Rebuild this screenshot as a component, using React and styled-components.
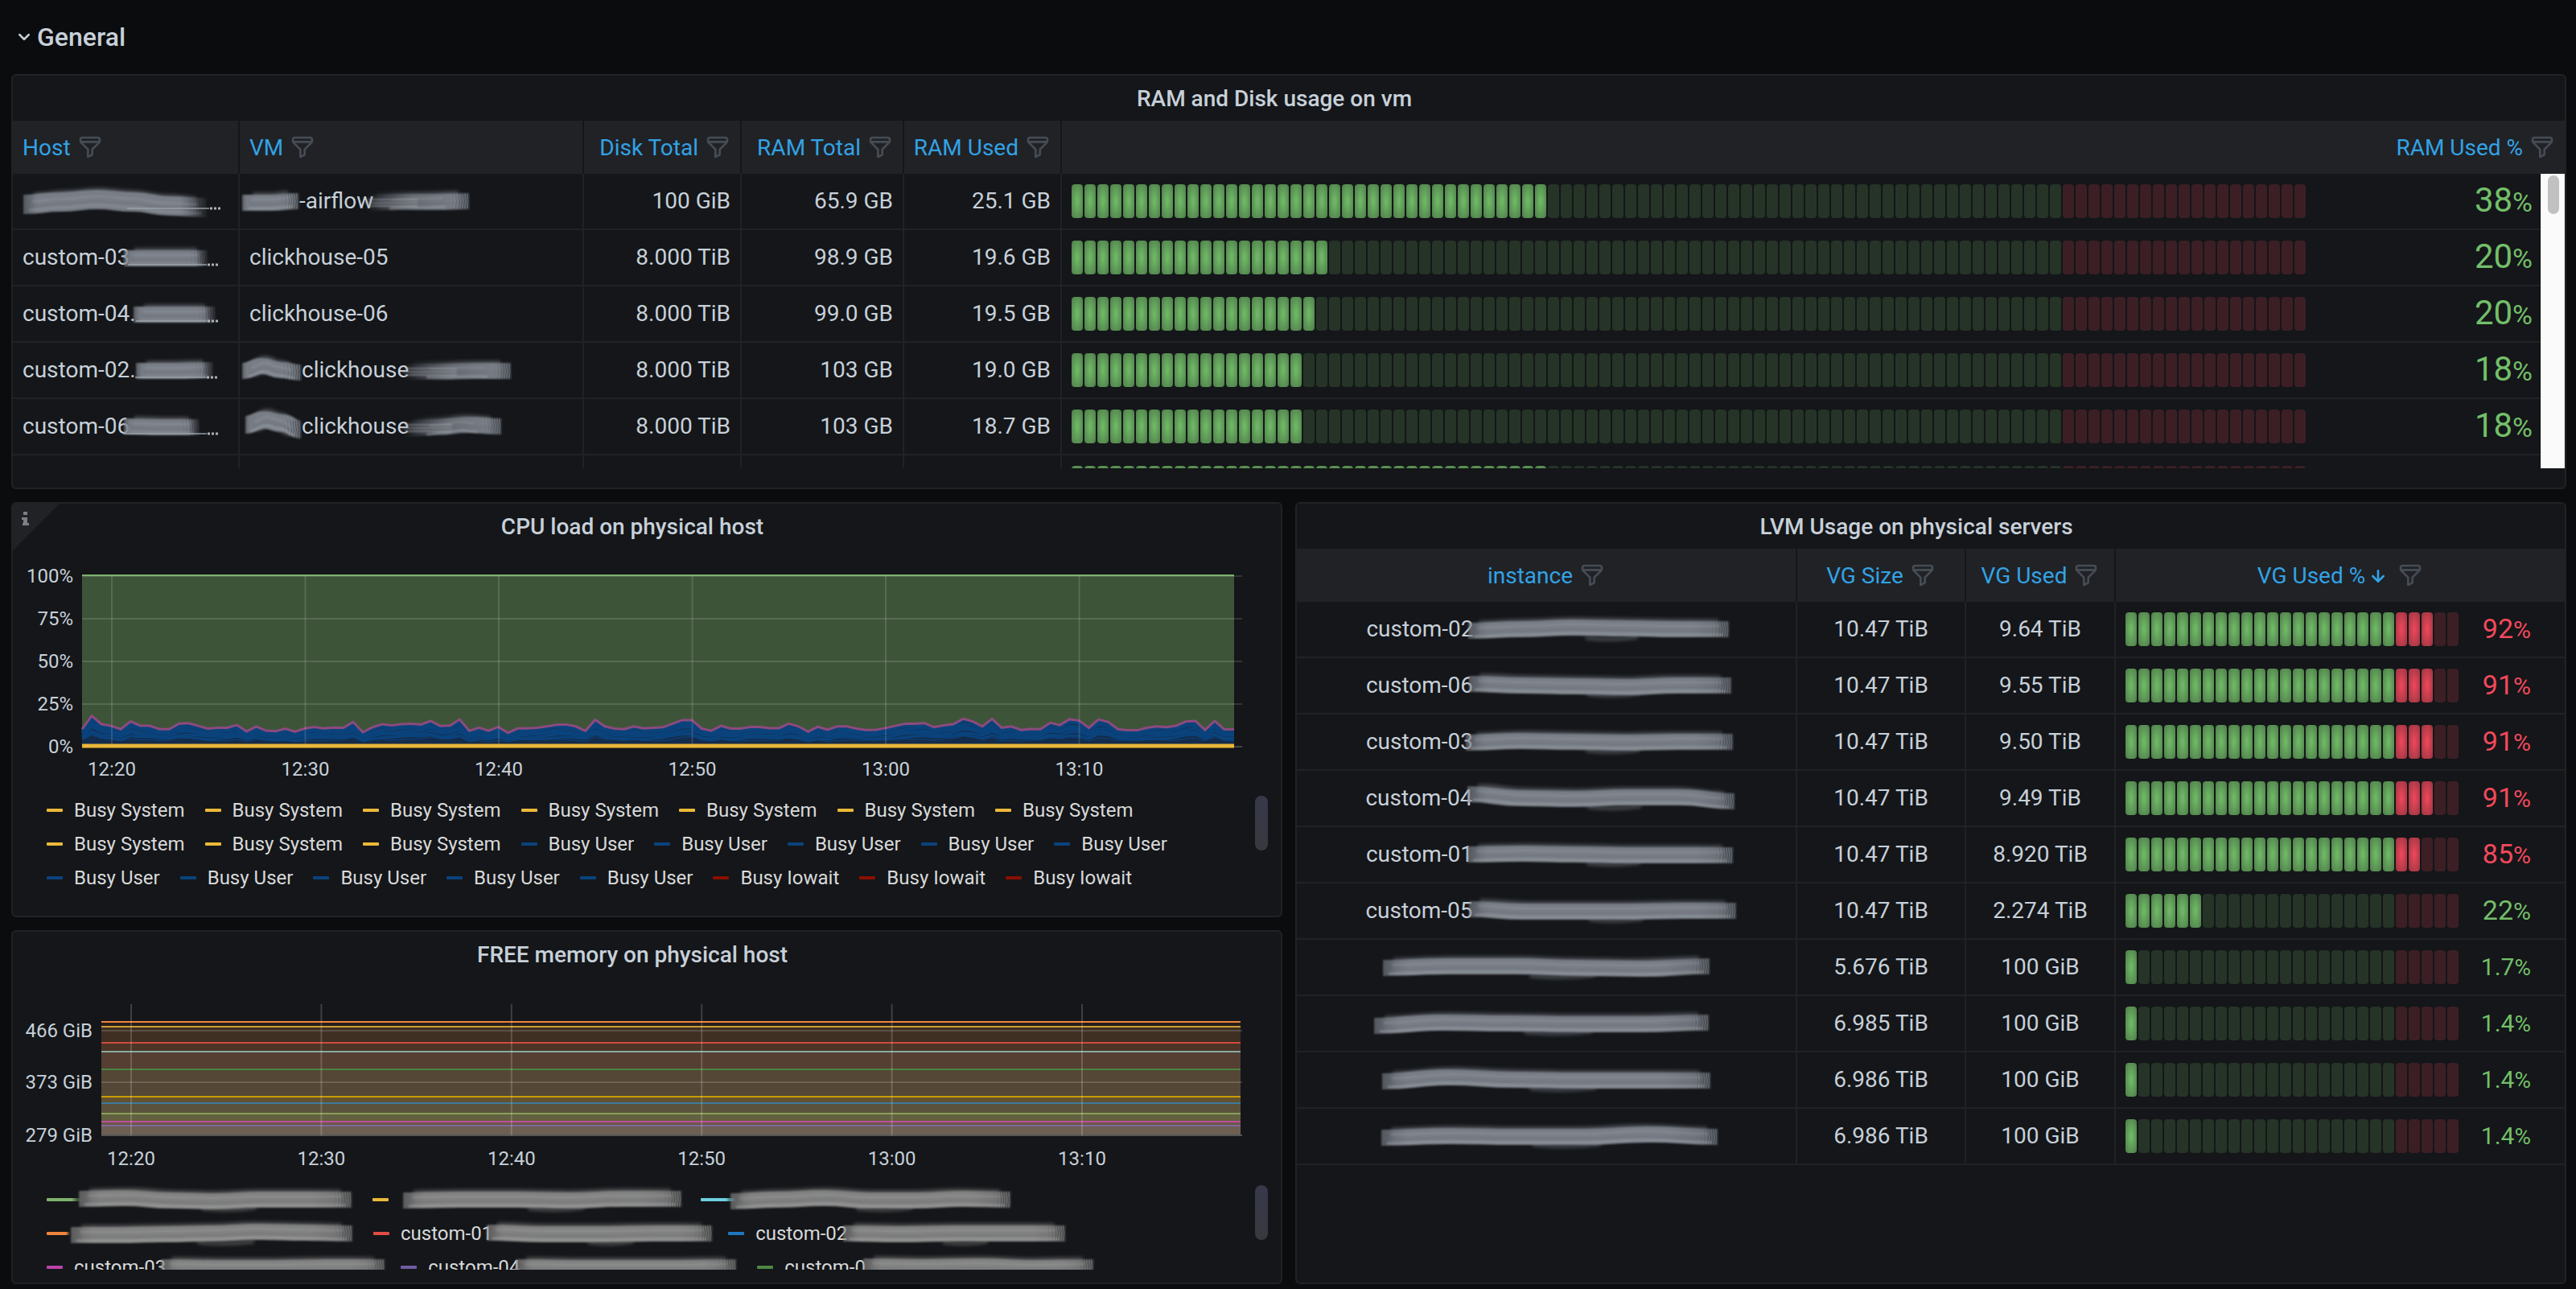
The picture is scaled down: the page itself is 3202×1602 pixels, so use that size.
import React, { useId } from 'react'
import styled, { createGlobalStyle, css } from 'styled-components'

const GREEN = '115, 191, 105'
const RED = '242, 73, 92'

const vmRows = [
  { host: [{ w: 230, curve: [4, 1, -2, 1, 6, 8], thick: 24, shift: 0, dots: 246 }], vm: [{ w: 72, curve: [2, 2, 0], shift: -10 }, '-airflow', { w: 130, curve: [2, 1, 1, 0], shift: -10, thin: true }], disk: '100 GiB', total: '65.9 GB', used: '25.1 GB', lit: 37, value: '38' },
  { host: ['custom-03', { w: 106, curve: [1, 1, 1], shift: -8, dots: 118 }], vm: ['clickhouse-05'], disk: '8.000 TiB', total: '98.9 GB', used: '19.6 GB', lit: 20, value: '20' },
  { host: ['custom-04.', { w: 104, curve: [1, 1, 1], shift: -4, dots: 106 }], vm: ['clickhouse-06'], disk: '8.000 TiB', total: '99.0 GB', used: '19.5 GB', lit: 19, value: '20' },
  { host: ['custom-02.', { w: 98, curve: [1, 1, 0], shift: -1, dots: 102 }], vm: [{ w: 75, curve: [1, -5, 0, 3], shift: -10 }, 'clickhouse', { w: 136, curve: [2, 2, 1, 1], shift: -8, thin: true }], disk: '8.000 TiB', total: '103 GB', used: '19.0 GB', lit: 18, value: '18' },
  { host: ['custom-06', { w: 96, curve: [0, 1, 1], shift: -8, dots: 118 }], vm: [{ w: 71, curve: [-2, -8, -4, 4], thick: 22, shift: -6 }, 'clickhouse', { w: 124, curve: [3, 1, -2, 0], shift: -8, thin: true }], disk: '8.000 TiB', total: '103 GB', used: '18.7 GB', lit: 18, value: '18' },
  { host: [], vm: [], disk: '', total: '', used: '', lit: 37, value: '' },
]

const lvmRows = [
  { name: ['custom-02', { w: 326, curve: [2, 0, -2, -1, 0, 0], shift: -8, tuck: 4 }], size: '10.47 TiB', used: '9.64 TiB', lit: 24, value: '92' },
  { name: ['custom-06', { w: 328, curve: [-2, 0, 1, 2, 0, 0], shift: -6, tuck: 7 }], size: '10.47 TiB', used: '9.55 TiB', lit: 24, value: '91' },
  { name: ['custom-03', { w: 334, curve: [1, -1, 0, 1, 0, 0], shift: -10, tuck: 9 }], size: '10.47 TiB', used: '9.50 TiB', lit: 24, value: '91' },
  { name: ['custom-04', { w: 334, curve: [-5, 0, 1, -1, -1, 4], shift: -8, tuck: 10 }], size: '10.47 TiB', used: '9.49 TiB', lit: 24, value: '91' },
  { name: ['custom-01', { w: 332, curve: [0, -1, 0, 1, 1, 1], shift: -8, tuck: 9 }], size: '10.47 TiB', used: '8.920 TiB', lit: 23, value: '85' },
  { name: ['custom-05', { w: 334, curve: [-2, 1, 1, 1, 0, 0], shift: -6, tuck: 12 }], size: '10.47 TiB', used: '2.274 TiB', lit: 6, value: '22' },
  { name: [{ w: 408, curve: [1, -1, -1, 1, 2, -1], shift: 0 }], size: '5.676 TiB', used: '100 GiB', lit: 1, value: '1.7' },
  { name: [{ w: 418, curve: [3, -1, 0, 1, 1, -1], shift: 0, tuck: -12 }], size: '6.985 TiB', used: '100 GiB', lit: 1, value: '1.4' },
  { name: [{ w: 410, curve: [2, -3, 0, 1, 1, 1], shift: 0 }], size: '6.986 TiB', used: '100 GiB', lit: 1, value: '1.4' },
  { name: [{ w: 420, curve: [2, 0, 1, 1, -2, 1], shift: 0, tuck: 8 }], size: '6.986 TiB', used: '100 GiB', lit: 1, value: '1.4' },
]

const cpuLegend = [
  ...Array(10).fill({ color: '#eab839', name: ['Busy System'] }),
  ...Array(10).fill({ color: '#0a437c', name: ['Busy User'] }),
  ...Array(3).fill({ color: '#890f02', name: ['Busy Iowait'] }),
]

const memLegend = [
  { color: '#7eb26d', trail: 24, name: [{ w: 341, curve: [-1, -2, 1, 2, 0, 0, 0], shift: 5 }] },
  { color: '#eab839', name: [{ w: 348, curve: [1, 0, 0, 1, -1, -1], shift: 3, tuck: 2 }] },
  { color: '#6ed0e0', trail: 24, name: [{ w: 350, curve: [2, 0, -2, 1, 1, -1, 0], shift: 2 }] },
  { color: '#ef843c', trail: 10, name: [{ w: 352, curve: [2, 2, 1, 0, -2, -1, 0], shift: -5 }] },
  { color: '#e24d42', name: ['custom-01', { w: 282, curve: [-1, 1, 1, 0, 0], shift: -8, tuck: 6 }] },
  { color: '#1f78c1', name: ['custom-02', { w: 278, curve: [0, 1, 0, 0, 0], shift: -6 }] },
  { color: '#ba43a9', name: ['custom-03', { w: 280, curve: [0, 1, 1, 0, 0], shift: -7, tuck: 6 }] },
  { color: '#705da0', name: ['custom-04', { w: 276, curve: [0, 1, 1, 1, 0], shift: -6 }] },
  { color: '#508642', name: ['custom-0', { w: 288, curve: [-1, 0, -1, 1, 0], shift: -4 }] },
]

const cpuLoad = [
  10.3, 18.1, 13.2, 12.2, 10.3, 14.8, 12.4, 12.2, 10.3, 10.3, 13.5, 13.8, 12.2, 10.6, 11.1, 11.1, 12.7, 9.0, 11.9, 9.4,
  9.1, 10.6, 8.8, 10.7, 11.6, 10.7, 11.2, 11.1, 14.5, 8.5, 11.4, 13.2, 12.5, 13.2, 13.5, 13.0, 15.1, 12.1, 12.4, 16.0,
  9.3, 11.2, 9.4, 11.6, 8.1, 10.7, 10.7, 11.1, 11.9, 12.9, 13.0, 11.9, 9.3, 15.8, 11.9, 10.6, 10.3, 11.9, 10.7, 11.1,
  11.4, 13.5, 15.6, 15.6, 10.6, 9.4, 12.2, 10.6, 10.6, 11.6, 11.6, 10.9, 10.9, 13.5, 11.9, 8.8, 11.7, 9.9, 11.9, 11.9,
  10.6, 9.8, 9.9, 10.9, 12.2, 13.4, 13.4, 13.8, 11.4, 12.5, 13.2, 16.3, 14.8, 11.9, 16.3, 11.1, 11.9, 9.8, 10.4, 10.3,
  14.0, 12.7, 16.1, 15.3, 11.1, 16.0, 14.5, 10.3, 9.6, 9.6, 11.1, 11.9, 11.4, 12.2, 14.7, 15.1, 9.8, 15.1, 10.1, 10.1,
]

const times = ['12:20', '12:30', '12:40', '12:50', '13:00', '13:10']

const memBands = [
  { y: 30, h: 6, fill: '#251e1a' },
  { y: 36, h: 20, fill: '#3e2f22' },
  { y: 56, h: 11, fill: '#4c3426' },
  { y: 67, h: 22, fill: '#553f33' },
  { y: 89, h: 34, fill: '#544735' },
  { y: 123, h: 8, fill: '#635130' },
  { y: 131, h: 13, fill: '#5a523c' },
  { y: 144, h: 10, fill: '#62603f' },
  { y: 154, h: 5, fill: '#6b5648' },
  { y: 159, h: 12, fill: '#6d5f52' },
]

const memLines = [
  [30, '#ef843c'], [36, '#cf9b35'], [56, '#d04a3f'], [67, '#86aba1'], [89, '#4b8440'],
  [123, '#c79c05'], [131, '#3c7b9c'], [144, '#8a9f58'], [154, '#bd4c9c'], [159, '#80689a'],
]

function FilterIcon() {
  return (
    <svg width="32" height="32" viewBox="0 0 24 24" fill="#464c54" aria-hidden="true">
      <path d="M19,2H5A3,3,0,0,0,2,5V6.17a3,3,0,0,0,.25,1.2l0,.06a2.81,2.81,0,0,0,.59.86L9,14.41V21a1,1,0,0,0,.47.85A1,1,0,0,0,10,22a1,1,0,0,0,.45-.11l4-2A1,1,0,0,0,15,19V14.41l6.12-6.12a2.81,2.81,0,0,0,.59-.86l0-.06A3,3,0,0,0,22,6.17V5A3,3,0,0,0,19,2ZM13.29,13.29A1,1,0,0,0,13,14v4.38l-2,1V14a1,1,0,0,0-.29-.71L5.41,8H18.59ZM20,6H4V5A1,1,0,0,1,5,4H19a1,1,0,0,1,1,1Z" />
    </svg>
  )
}

function ArrowDown() {
  return (
    <svg width="32" height="32" viewBox="0 0 24 24" fill="#33a2e5" aria-hidden="true">
      <path d="M17.71,11.29a1,1,0,0,0-1.42,0L13,14.59V7a1,1,0,0,0-2,0v7.59l-3.29-3.3a1,1,0,0,0-1.42,1.42l5,5a1,1,0,0,0,.33.21.94.94,0,0,0,.76,0,1,1,0,0,0,.33-.21l5-5A1,1,0,0,0,17.71,11.29Z" />
    </svg>
  )
}

// smooth line through evenly spaced heights
function curvePath(w, curve, dy, inset = 0) {
  const step = (w - inset * 2) / (curve.length - 1)
  const pts = curve.map((y, i) => [inset + i * step, 24 + y + dy])
  let d = `M${pts[0][0]},${pts[0][1]}`
  for (let i = 1; i < pts.length; i++) {
    const [px, py] = pts[i - 1]
    const [x, y] = pts[i]
    const mx = (px + x) / 2
    d += ` C${mx},${py} ${mx},${y} ${x},${y}`
  }
  return d
}

// brushed-out part of a host name
function Smudge({ w, curve, thick = 20, shift, tuck = 0, dots, thin, warm }) {
  const id = useId()
  const base = warm ? '#858585' : '#7c818a'
  const light = warm ? '#a8a8a8' : '#9ea3aa'
  const combs = [2, 5, 8, 11, 14, 18, 22]
  return (
    <SmudgeSvg width={w} height="48" viewBox={`0 0 ${w} 48`} $shift={shift} $tuck={tuck} aria-hidden="true">
      <defs>
        <linearGradient id={id} gradientUnits="userSpaceOnUse" x1="0" x2={w} y1="0" y2="0">
          <stop offset="0" stopColor={base} stopOpacity={thin ? 0 : 0.6} />
          <stop offset={thin ? 0.45 : 0.08} stopColor={base} stopOpacity={thin ? 0.7 : 0.95} />
          <stop offset="0.85" stopColor={base} stopOpacity="0.95" />
          <stop offset="1" stopColor={base} stopOpacity={dots ? 0.1 : 0.7} />
        </linearGradient>
      </defs>
      <Soft $blur={2}>
        <path d={curvePath(w, curve, -3, 14)} stroke={`url(#${id})`} strokeWidth={thick} opacity="0.5" />
        {w > 260 && <path d={`M${w * 0.45},35 Q${w * 0.55},39 ${w * 0.65},34`} stroke={base} strokeWidth="4" opacity="0.5" />}
      </Soft>
      <Soft $blur={1}>
        <path d={curvePath(w, curve, 0, 1)} stroke={`url(#${id})`} strokeWidth={thick} />
        {thin && <path d={`M0,26 H${w * 0.5} M4,22 H${w * 0.5} M4,30 H${w * 0.5}`} stroke={light} strokeWidth="2" opacity="0.6" />}
        <path d={curvePath(w, curve, 7, thin ? 30 : 8)} stroke={light} strokeWidth="3" opacity={dots ? 0.3 : 0.5} />
        <path d={curvePath(w, curve, -4, thin ? 34 : 12)} stroke={light} strokeWidth="2" opacity="0.35" />
        <path d={curvePath(w, curve, 2, 10)} stroke="#60656d" strokeWidth="2" opacity="0.25" />
      </Soft>
      {combs.map((x) => (
        <path key={x} d={`M${w - x},${13 + curve[curve.length - 1]} q3,11 0,22`} stroke="#141619" strokeWidth="1" opacity={0.5 - x / 50} fill="none" />
      ))}
      {dots && (
        <>
          <path d={`M${Math.max(0, w - 100)},33 H${dots - 14}`} stroke="#9ca3aa" strokeWidth="2" opacity="0.7" />
          <path d={`M${dots - 13},33 H${dots}`} stroke="#aab1b8" strokeWidth="3" strokeDasharray="3 2" />
        </>
      )}
    </SmudgeSvg>
  )
}

function Name({ parts, warm }) {
  return (
    <NameBox>
      {parts.map((p, i) => (typeof p === 'string' ? <span key={i}>{p}</span> : <Smudge key={i} warm={warm} {...p} />))}
    </NameBox>
  )
}

function HeadCell({ label, align, sorted }) {
  return (
    <Th scope="col" aria-sort={sorted ? 'descending' : undefined}>
      <HeadInner $align={align}>
        <SortButton type="button">
          {label}
          {sorted && <ArrowDown />}
        </SortButton>
        <IconButton type="button" aria-label={`Filter ${label}`}>
          <FilterIcon />
        </IconButton>
      </HeadInner>
    </Th>
  )
}

function Gauge({ count, greens, lit, value, wide }) {
  const alert = lit > greens
  return (
    <GaugeBox>
      <Leds>
        {Array.from({ length: count }, (_, i) => (
          <Led key={i} $rgb={i < greens ? GREEN : RED} $on={i < lit} />
        ))}
      </Leds>
      <GaugeValue $wide={wide} $small={value.length > 2} $rgb={alert ? RED : GREEN}>
        {value}
        {value && <small>%</small>}
      </GaugeValue>
    </GaugeBox>
  )
}

function Legend({ items, rows, warm }) {
  return (
    <LegendWrap>
      <LegendList $height={rows}>
        {items.map((item, i) => (
          <li key={i}>
            <LegendButton type="button" aria-label={typeof item.name[0] === 'string' ? undefined : `Series ${i + 1}`}>
              <Dash $color={item.color} $trail={item.trail} />
              <Name parts={item.name} warm={warm} />
            </LegendButton>
          </li>
        ))}
      </LegendList>
      <LegendThumb />
    </LegendWrap>
  )
}

function CpuChart() {
  const left = 86
  const right = 1518
  const y = (pct) => 246 - pct * 2.12
  const line = (k) => cpuLoad.map((v, i) => {
    const wobble = k < 1 ? Math.sin(i * 0.7 + k * 20) * 0.5 : 0
    return `${(left + (i * (right - left)) / (cpuLoad.length - 1)).toFixed(1)},${y(v * k + wobble).toFixed(1)}`
  }).join(' ')
  return (
    <Chart viewBox="0 0 1576 304" role="img" aria-label="CPU load on physical host">
      <rect x={left} y={y(100)} width={right - left} height="212" fill="#3e5439" />
      <polygon points={`${left},246 ${line(1)} ${right},246`} fill="#142c4c" />
      {[0.35, 0.44, 0.53, 0.62, 0.7, 0.78, 0.86, 0.93].map((k) => (
        <polyline key={k} points={line(k)} fill="none" stroke="#0a437c" strokeWidth={k === 0.35 ? 1 : 3} />
      ))}
      <polyline points={line(1)} fill="none" stroke="#8c4a7e" strokeWidth="3" />
      {[100, 75, 50, 25, 0].map((p) => (
        <g key={p}>
          <line x1={left} x2="1528" y1={y(p)} y2={y(p)} stroke="#fff" strokeOpacity={p ? 0.13 : 0.2} strokeWidth="2" />
          <text x="75" y={y(p) + 8} textAnchor="end">{p}%</text>
        </g>
      ))}
      {times.map((t, i) => (
        <g key={t}>
          <line x1={123 + i * 240.5} x2={123 + i * 240.5} y1="34" y2="246" stroke="#fff" strokeOpacity="0.13" strokeWidth="2" />
          <text x={123 + i * 240.5} y="282" textAnchor="middle">{t}</text>
        </g>
      ))}
      <line x1={left} x2={right} y1="33" y2="33" stroke="#7eb26d" strokeWidth="2" />
      <line x1={left} x2={right} y1="245" y2="245" stroke="#eab839" strokeWidth="5" />
    </Chart>
  )
}

function MemChart() {
  return (
    <Chart viewBox="0 0 1576 256" role="img" aria-label="FREE memory on physical host">
      <g transform="translate(0 26)">
        {memBands.map((b) => <rect key={b.y} x="110" y={b.y} width="1416" height={b.h} fill={b.fill} />)}
        {memLines.map(([y, c]) => <line key={y} x1="110" x2="1526" y1={y} y2={y} stroke={c} strokeWidth="2" />)}
        {[[41, '466 GiB'], [105, '373 GiB'], [171, '279 GiB']].map(([y, t]) => (
          <g key={t}>
            <line x1="110" x2="1528" y1={y} y2={y} stroke={y === 171 ? '#565656' : '#fff'} strokeOpacity={y === 171 ? 1 : 0.15} strokeWidth="2" />
            <text x="99" y={y + 8} textAnchor="end">{t}</text>
          </g>
        ))}
        {times.map((t, i) => (
          <g key={t}>
            <line x1={147 + i * 236.4} x2={147 + i * 236.4} y1="8" y2="171" stroke="#fff" strokeOpacity="0.18" strokeWidth="2" />
            <text x={147 + i * 236.4} y="208" textAnchor="middle">{t}</text>
          </g>
        ))}
      </g>
    </Chart>
  )
}

export default function App() {
  return (
    <>
      <GlobalStyle />
      <Page>
        <RowToggle type="button" aria-expanded="true">
          <svg width="32" height="32" viewBox="0 0 24 24" fill="#c7d0d9" aria-hidden="true">
            <path d="M17,9.17a1,1,0,0,0-1.41,0L12,12.71,8.46,9.17a1,1,0,0,0-1.41,0,1,1,0,0,0,0,1.42l4.24,4.24a1,1,0,0,0,1.42,0L17,10.59A1,1,0,0,0,17,9.17Z" />
          </svg>
          General
        </RowToggle>
        <Dashboard>
          <Panel $area="vm">
            <PanelTitle>RAM and Disk usage on vm</PanelTitle>
            <TableWrap>
              <Table>
                <colgroup>
                  <Col $w={282} />
                  <Col $w={428} />
                  <Col $w={196} />
                  <Col $w={202} />
                  <Col $w={196} />
                  <Col />
                </colgroup>
                <thead>
                  <tr>
                    <HeadCell label="Host" />
                    <HeadCell label="VM" />
                    <HeadCell label="Disk Total" align="right" />
                    <HeadCell label="RAM Total" align="right" />
                    <HeadCell label="RAM Used" align="right" />
                    <HeadCell label="RAM Used %" align="right" />
                  </tr>
                </thead>
                <tbody>
                  {vmRows.map((r, i) => (
                    <tr key={i}>
                      <Td><Name parts={r.host} /></Td>
                      <Td><Name parts={r.vm} /></Td>
                      <Td $align="right">{r.disk}</Td>
                      <Td $align="right">{r.total}</Td>
                      <Td $align="right">{r.used}</Td>
                      <Td $scroll><Gauge count={96} greens={77} lit={r.lit} value={r.value} wide /></Td>
                    </tr>
                  ))}
                </tbody>
              </Table>
              <ScrollTrack><ScrollThumb /></ScrollTrack>
            </TableWrap>
          </Panel>

          <Panel $area="cpu">
            <InfoCorner viewBox="0 0 58 58" aria-hidden="true">
              <path d="M0 0H58L0 58Z" fill="#202226" />
              <path d="M13 10h5v4h-5zM11 17h7v7h2v3h-8v-3h1v-4h-2z" fill="#7b8087" />
            </InfoCorner>
            <PanelTitle>CPU load on physical host</PanelTitle>
            <CpuChart />
            <Legend items={cpuLegend} rows={126} />
          </Panel>

          <Panel $area="lvm">
            <PanelTitle>LVM Usage on physical servers</PanelTitle>
            <Table>
              <colgroup>
                <Col />
                <Col $w={210} />
                <Col $w={186} />
                <Col $w={558} />
              </colgroup>
              <thead>
                <tr>
                  <HeadCell label="instance" align="center" />
                  <HeadCell label="VG Size" align="center" />
                  <HeadCell label="VG Used" align="center" />
                  <HeadCell label="VG Used %" align="center" sorted />
                </tr>
              </thead>
              <tbody>
                {lvmRows.map((r, i) => (
                  <tr key={i}>
                    <Td $align="center"><Name parts={r.name} /></Td>
                    <Td $align="center">{r.size}</Td>
                    <Td $align="center">{r.used}</Td>
                    <Td><Gauge count={26} greens={21} lit={r.lit} value={r.value} /></Td>
                  </tr>
                ))}
              </tbody>
            </Table>
          </Panel>

          <Panel $area="mem">
            <PanelTitle>FREE memory on physical host</PanelTitle>
            <MemChart />
            <Legend items={memLegend} rows={108} warm />
          </Panel>
        </Dashboard>
      </Page>
    </>
  )
}

const GlobalStyle = createGlobalStyle`
*{
    box-sizing: border-box;
}
body{
    margin: 0;
    background: #0b0c0e;
    color: #c7d0d9;
    font-family: Roboto, "Liberation Sans", sans-serif;
    font-size: 28px;
    line-height: 32px;
}
button{
    font: inherit;
    color: inherit;
    background: none;
    border: 0;
    padding: 0;
    cursor: pointer;
}
`
const Page = styled.main`
padding: 0 12px 6px 14px;
`
const RowToggle = styled.button`
display: flex;
align-items: center;
height: 92px;
font-size: 32px;
font-weight: 500;
`
const Dashboard = styled.div`
display: grid;
grid-template-columns: minmax(0, 1fr) minmax(0, 1fr);
grid-template-rows: 516px 516px 440px;
grid-template-areas: "vm vm" "cpu lvm" "mem lvm";
gap: 16px;
`
const Panel = styled.section`
grid-area: ${(p) => p.$area};
position: relative;
background: #141619;
border: 2px solid #202226;
border-radius: 6px;
overflow: hidden;
`
const PanelTitle = styled.h2`
display: flex;
align-items: center;
justify-content: center;
height: 56px;
margin: 0;
padding: 2px 36px 0 0;
font-size: 28px;
font-weight: 500;
`
const TableWrap = styled.div`
position: relative;
height: 432px;
overflow: hidden;
`
const Table = styled.table`
width: 100%;
table-layout: fixed;
border-collapse: separate;
border-spacing: 0;
`
const Col = styled.col`
width: ${(p) => (p.$w ? `${p.$w}px` : 'auto')};
`
const Th = styled.th`
height: 66px;
padding: 0 12px;
background: #202226;
border-right: 2px solid #141619;
font-weight: 400;
color: #33a2e5;
&:last-child{
    border-right: 0;
}
`
const HeadInner = styled.div`
display: flex;
align-items: center;
gap: 8px;
justify-content: ${(p) => (p.$align === 'right' ? 'flex-end' : p.$align === 'center' ? 'center' : 'flex-start')};
`
const SortButton = styled.button`
display: flex;
align-items: center;
padding-top: 2px;
white-space: nowrap;
`
const IconButton = styled.button`
display: flex;
`
const Td = styled.td`
height: 70px;
padding: 0 ${(p) => (p.$scroll ? 40 : 12)}px 0 12px;
border-right: 2px solid #202226;
border-bottom: 2px solid #202226;
text-align: ${(p) => p.$align || 'left'};
line-height: 34px;
white-space: nowrap;
&:last-child{
    border-right: 0;
}
`
const NameBox = styled.span`
display: inline-flex;
align-items: center;
height: 42px;
vertical-align: middle;
`
const SmudgeSvg = styled.svg`
flex: none;
overflow: visible;
margin-left: ${(p) => p.$shift}px;
margin-right: ${(p) => -p.$tuck}px;
`
const Soft = styled.g`
fill: none;
filter: blur(${(p) => p.$blur}px);
`
const GaugeBox = styled.div`
display: flex;
align-items: center;
`
const Leds = styled.div`
flex: 1;
display: flex;
gap: 2px;
height: 42px;
`
const Led = styled.span`
flex: 1;
border-radius: 4px;
background: rgba(${(p) => p.$rgb}, 0.18);
${(p) => p.$on && css`
    background: radial-gradient(rgba(${p.$rgb}, 0.95) 10%, rgba(${p.$rgb}, 0.6));
`}
`
const GaugeValue = styled.span`
width: ${(p) => (p.$wide ? 282 : 120)}px;
padding-right: ${(p) => (p.$wide ? 0 : 30)}px;
text-align: right;
color: rgb(${(p) => p.$rgb});
font-size: ${(p) => (p.$wide ? 42 : p.$small ? 30 : 34)}px;
line-height: 42px;
small{
    font-size: ${(p) => (p.$wide ? 34 : p.$small ? 28 : 30)}px;
}
`
const ScrollTrack = styled.div`
position: absolute;
top: 66px;
right: 0;
bottom: 0;
width: 30px;
padding: 2px 6px 0 8px;
background: #fafafa;
border-left: 1px solid #e8e8e8;
border-right: 1px solid #e8e8e8;
`
const ScrollThumb = styled.div`
height: 48px;
border-radius: 8px;
background: #c1c1c1;
`
const InfoCorner = styled.svg`
position: absolute;
top: 0;
left: 0;
width: 58px;
height: 58px;
`
const Chart = styled.svg`
display: block;
width: 100%;
height: auto;
text{
    fill: #c7d0d9;
    font-size: 24px;
}
`
const LegendWrap = styled.div`
position: relative;
padding: 0 38px 0 42px;
`
const LegendList = styled.ul`
display: flex;
flex-wrap: wrap;
column-gap: 25px;
max-height: ${(p) => p.$height}px;
margin: 0;
padding: 0;
list-style: none;
overflow: hidden;
`
const LegendButton = styled.button`
display: flex;
align-items: center;
gap: 14px;
height: 42px;
color: #d8d9da;
font-size: 24px;
`
const Dash = styled.span`
position: relative;
width: 20px;
height: 4px;
border-radius: 1px;
background: ${(p) => p.$color};
&::after{
    content: "";
    position: absolute;
    left: 19px;
    width: ${(p) => p.$trail || 0}px;
    height: 4px;
    background: linear-gradient(90deg, ${(p) => p.$color} 50%, transparent);
}
`
const LegendThumb = styled.div`
position: absolute;
top: 3px;
right: 16px;
width: 16px;
height: 68px;
border-radius: 8px;
background: linear-gradient(#37394b, #38393e);
`
